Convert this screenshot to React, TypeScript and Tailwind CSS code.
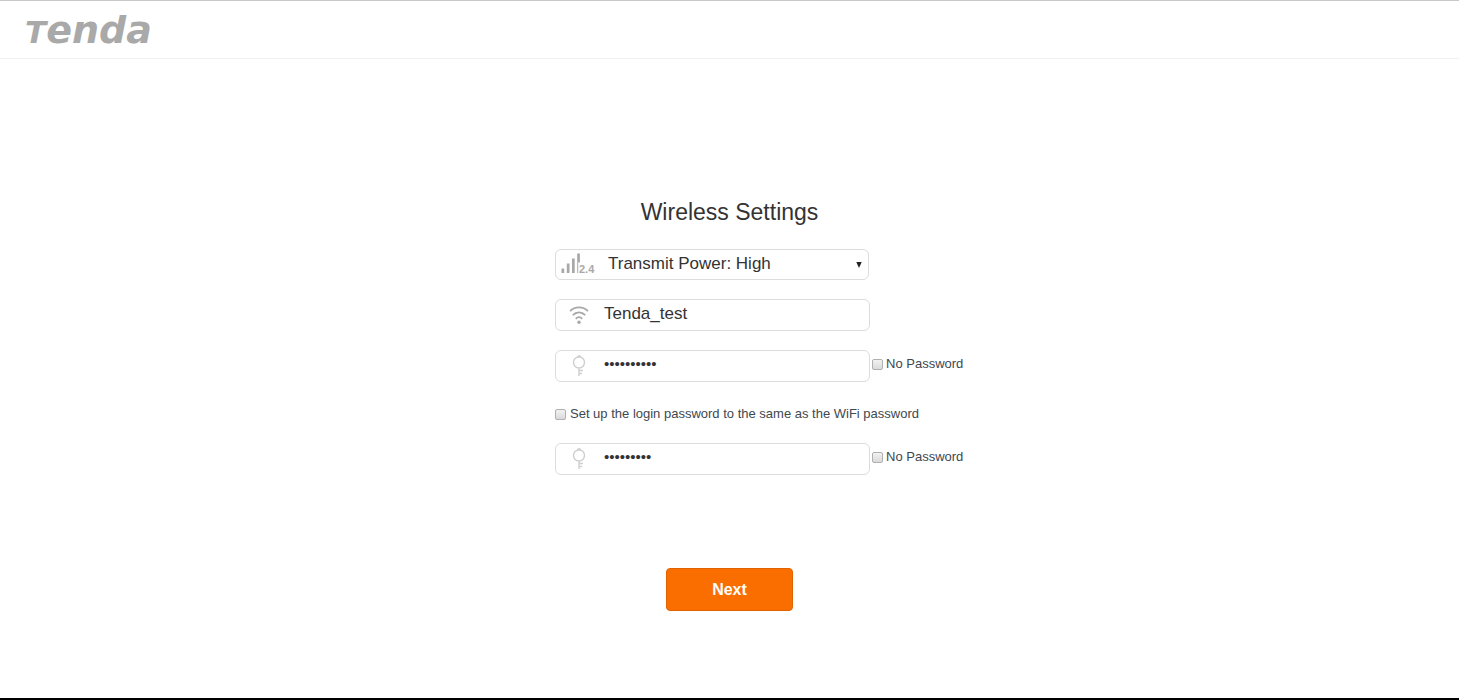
import { useState } from 'react';

function Logo() {
  return (
    <svg width="136" height="46" viewBox="0 0 136 46" role="img" aria-label="Tenda">
      <text
        x="1"
        y="37"
        fill="#a9a9a9"
        className="font-['DejaVu_Sans',sans-serif] font-bold italic"
      >
        <tspan fontSize="31">T</tspan>
        <tspan fontSize="38">enda</tspan>
      </text>
    </svg>
  );
}

function SignalIcon() {
  return (
    <svg width="40" height="26" viewBox="0 0 40 26" fill="#a8a8a8" aria-hidden="true">
      <rect x="1.5" y="16.5" width="2.7" height="4.5" />
      <rect x="6.8" y="11.5" width="2.7" height="9.5" />
      <rect x="12" y="6.5" width="2.7" height="14.5" />
      <rect x="17.2" y="1.5" width="2.7" height="9" />
      <rect x="17.2" y="10.5" width="1" height="10.5" />
      <text x="19" y="21" fontSize="11" className="font-['Liberation_Sans',sans-serif] font-bold">
        2.4
      </text>
    </svg>
  );
}

function WifiIcon() {
  return (
    <svg
      width="20"
      height="20"
      viewBox="0 0 20 20"
      fill="none"
      stroke="#a8a8a8"
      strokeWidth="1.8"
      aria-hidden="true"
    >
      <path d="M1 6.2C6 1.2 14 1.2 19 6.2" />
      <path d="M3.8 10.2C7.3 6.4 12.7 6.4 16.2 10.2" />
      <path d="M6.8 13.8C8.8 11.6 11.2 11.6 13.2 13.8" />
      <circle cx="10" cy="17.2" r="1.7" fill="#a8a8a8" stroke="none" />
    </svg>
  );
}

function KeyIcon() {
  return (
    <svg
      width="20"
      height="22"
      viewBox="0 0 20 22"
      fill="none"
      stroke="#cfcfcf"
      strokeWidth="1.4"
      aria-hidden="true"
    >
      <circle cx="10" cy="7.5" r="5.5" />
      <path d="M8.5 2.2a1.5 1.5 0 0 1 3 0" />
      <path d="M10 13v8M10 15.5h4M10 18.5h3" />
    </svg>
  );
}

const fieldClass = 'flex shrink-0 items-center rounded-md border border-[#dcdcdc] bg-white';
const checkboxClass =
  'size-[11px] shrink-0 appearance-none rounded-xs border border-[#b0b0b0] bg-linear-to-b from-[#f2f2f2] to-[#dadada] checked:bg-none checked:bg-[#fa6e00]';

interface PasswordRowProps {
  label: string;
  initial: string;
}

function PasswordRow({ label, initial }: PasswordRowProps) {
  const [value, setValue] = useState(initial);
  return (
    <div className="flex items-center gap-0.5">
      <div className={`${fieldClass} h-8 w-[315px]`}>
        <span className="flex w-[46px] justify-center">
          <KeyIcon />
        </span>
        <input
          type="password"
          aria-label={label}
          value={value}
          onChange={(e) => setValue(e.target.value)}
          className="min-w-0 flex-1 bg-transparent pb-[3px] pl-0.5 text-[15px] outline-none"
        />
      </div>
      <label className="mb-1 flex items-center gap-[3px] whitespace-nowrap text-[13px] text-[#404850]">
        <input type="checkbox" className={checkboxClass} />
        No Password
      </label>
    </div>
  );
}

export default function App() {
  const [ssid, setSsid] = useState('Tenda_test');

  return (
    <div className="flex min-h-screen flex-col border-t border-[#c8c8c8] bg-white font-['Liberation_Sans',Arial,sans-serif] text-[#333]">
      <header className="border-b border-[#f0f0f0] px-6 pt-[5px] pb-[6px]">
        <Logo />
      </header>

      <main className="mx-auto w-[349px] pt-[137px]">
        <h1 className="text-center text-[23px] leading-8">Wireless Settings</h1>

        <form className="mt-[21px]" onSubmit={(e) => e.preventDefault()}>
          <div className={`${fieldClass} relative h-[31px] w-[314px]`}>
            <span className="flex w-12 pl-1">
              <SignalIcon />
            </span>
            <select
              aria-label="Transmit Power"
              className="min-w-0 flex-1 appearance-none bg-transparent pb-0.5 pl-1 text-[17px] outline-none"
            >
              <option>Transmit Power: High</option>
              <option>Transmit Power: Medium</option>
              <option>Transmit Power: Low</option>
            </select>
            <svg
              width="6"
              height="6"
              viewBox="0 0 6 6"
              className="pointer-events-none absolute right-1.5"
              aria-hidden="true"
            >
              <path d="M0.3 0h5.4L3 6z" fill="#222" />
            </svg>
          </div>

          <div className={`${fieldClass} mt-[19px] h-8 w-[315px]`}>
            <span className="flex w-[46px] justify-center">
              <WifiIcon />
            </span>
            <input
              type="text"
              aria-label="WiFi name"
              value={ssid}
              onChange={(e) => setSsid(e.target.value)}
              className="min-w-0 flex-1 bg-transparent pb-0.5 pl-0.5 text-[17px] outline-none"
            />
          </div>

          <div className="mt-[19px]">
            <PasswordRow label="WiFi password" initial="wifi123456" />
          </div>

          <label className="mt-[22px] mb-[19px] flex items-center gap-1 whitespace-nowrap text-[13px] leading-5 text-[#404850]">
            <input type="checkbox" className={checkboxClass} />
            Set up the login password to the same as the WiFi password
          </label>

          <PasswordRow label="Login password" initial="admin1234" />

          <button
            type="submit"
            className="mx-auto mt-[93px] block h-[43px] w-[127px] rounded-sm border border-[#e06300] bg-[#fa6e00] text-base font-bold text-white"
          >
            Next
          </button>
        </form>
      </main>

      <footer className="mt-auto h-0.5 bg-black" />
    </div>
  );
}
